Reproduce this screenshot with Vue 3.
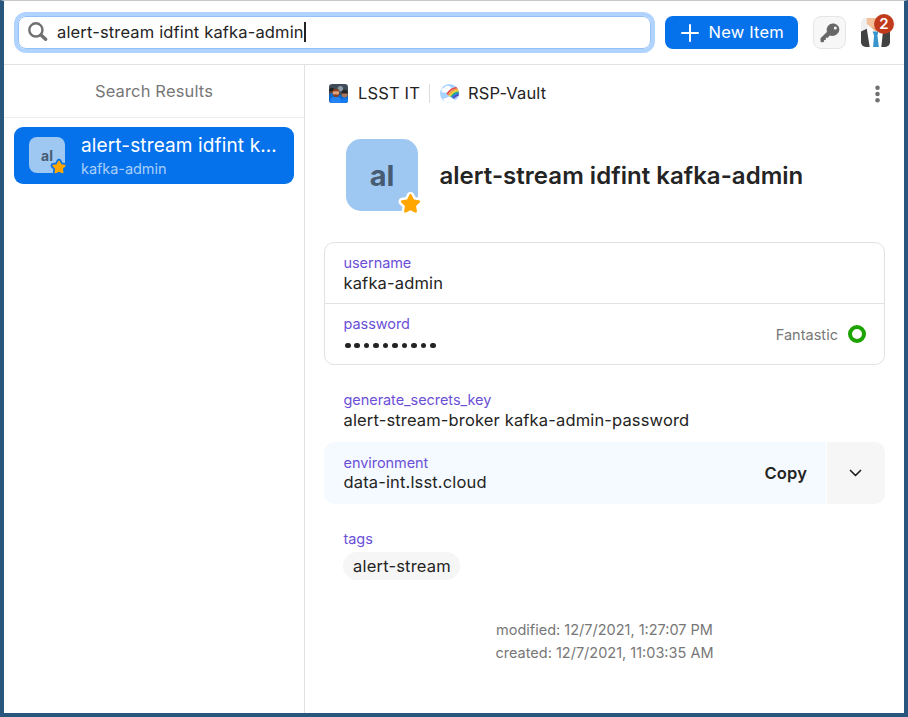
<script setup>
import { ref } from 'vue'

const query = 'alert-stream idfint kafka-admin'
const dots = ref(10)
const star = 'M12 2.2c.6 0 1 .4 1.3.9l2.3 4.7 5.2.8c1.3.2 1.7 1.5.8 2.4l-3.8 3.7.9 5.2c.2 1.3-.9 2-2 1.5L12 19l-4.7 2.4c-1.1.5-2.2-.2-2-1.5l.9-5.2-3.8-3.7c-.9-.9-.5-2.2.8-2.4l5.2-.8 2.3-4.7c.3-.5.7-.9 1.3-.9z'
</script>

<template>
  <div class="window">
    <header class="topbar">
      <div class="search">
        <svg class="search-icon" viewBox="0 0 20 20"><circle cx="7.9" cy="7.9" r="6.6" /><path d="M13 13l4.6 4.3" /></svg>
        <span class="query">{{ query }}</span><i class="caret"></i>
      </div>
      <button class="new-item">
        <svg viewBox="0 0 18 18"><path d="M9 1v16M1 9h16" /></svg>
        <span>New Item</span>
      </button>
      <button class="key">
        <svg viewBox="0 0 20 20"><path fill-rule="evenodd" d="M12.6.4a6.5 6.5 0 0 0-5.7 8.5L.5 15.2v3.3l.8.7h2l.8-.9V17l1.600-.1.2-2.200h1.900l2-2.200c4.500 1.500 9.500-1.500 9.500-6.300 0-3.400-3.200-6-6.700-5.800zm2.700 3.100a1.500 1.500 0 1 1 0 3 1.500 1.500 0 0 1 0-3z" /></svg>
      </button>
      <div class="account">
        <svg viewBox="0 0 30 30">
          <defs><clipPath id="avatar"><rect width="30" height="30" rx="5" /></clipPath></defs>
          <g clip-path="url(#avatar)">
            <path fill="#efefef" d="M0 0h30v30H0z" />
            <path fill="#fff" d="M7 7l8 5 7-5 4 23H5z" />
            <path fill="#f3c09b" d="M6 0h16v8l-7 6-9-8z" />
            <path fill="#e3aa83" d="M10 8l5 3 6-2-6 5z" />
            <path fill="#424242" d="M0 14l6-3 3 19H0zM30 14l-7-3-2 19h9z" />
            <path fill="#3996cc" d="M12 14h6l-1 4 1.5 12h-6l1-12z" />
          </g>
        </svg>
        <span class="badge">2</span>
      </div>
    </header>

    <div class="body">
      <aside>
        <h2>Search Results</h2>
        <div class="result">
          <div class="tile small">
            <b>al</b>
            <svg class="star" viewBox="0 0 24 24"><path :d="star" /></svg>
          </div>
          <div class="result-text">
            <p class="result-title">{{ query }}</p>
            <p class="result-sub">kafka-admin</p>
          </div>
        </div>
      </aside>

      <main>
        <div class="crumbs">
          <svg viewBox="0 0 20 20">
            <defs><clipPath id="team"><rect width="20" height="20" rx="3.5" /></clipPath></defs>
            <g clip-path="url(#team)">
              <path fill="#3f4b58" d="M0 0h20v20H0z" />
              <circle cx="12" cy="5" r="2.8" fill="#8b9aa7" />
              <circle cx="3.3" cy="7.5" r="2.8" fill="#6b4433" /><path fill="#222" d="M0 6q3-4 6.5 0v1.5H0z" />
              <path fill="#0a68cf" d="M0 20v-9q4-3 9 0l11 2v7z" />
              <path fill="#2383f2" d="M1 20q0-7 6-7t7 7z" />
              <circle cx="7.3" cy="9.5" r="3.4" fill="#e1a17b" />
              <path fill="#853f22" d="M3.700 8.500q0-3.500 3.700-3.500t3.700 3.500L10 7.500H5zM4 10.500q3.500 1.200 6.700 0l-.8 2.500q-2.500 2-5 0z" />
              <circle cx="16.5" cy="11" r="3.2" fill="#a8755a" /><path fill="#252527" d="M13 10q0-4 3.500-4t3.500 4z" />
              <path fill="#137af0" d="M12 20q0-5 4.500-5t4.500 5z" />
            </g>
          </svg>
          <span class="team-name">LSST IT</span>
          <i class="divider"></i>
          <svg viewBox="0 0 20 20">
            <defs><clipPath id="vault"><circle cx="10" cy="10" r="10" /></clipPath></defs>
            <g clip-path="url(#vault)">
              <path fill="#a9d3ff" d="M0 0h20v20H0z" />
              <path fill="#fff" d="M1.500 7q0-3 3-3 1.500-3 5-2 2.500 1 2.500 3l-5 4H3.500q-2 0-2-2z" />
              <g class="rainbow"><path stroke="#ef4545" d="M7.500 11Q11 3.700 20 3.700" /><path stroke="#ff982f" d="M8.800 12q3.700-6.500 11.200-6.700" /><path stroke="#f8d735" d="M10.200 12.800Q13.500 7.500 20 6.900" /><path stroke="#42ae68" d="M11.500 13.500q3-4.500 8.500-5.100" /><path stroke="#2685dc" d="M12.700 14.300q2.500-3.700 7.300-4.400" /><path stroke="#5544b7" d="M14 15q2-3 6-3.600" /></g>
              <path fill="#fff" d="M4 20l-.500-4q1.500-2 3.500-1 1-2 3.500-1.300 1.500.3 2 1.800 2.500-.5 3 1.500l3-2v5z" />
            </g>
          </svg>
          <span class="vault-name">RSP-Vault</span>
          <svg class="more" viewBox="0 0 6 20"><circle cx="3" cy="2.6" r="2.7" /><circle cx="3" cy="10" r="2.7" /><circle cx="3" cy="17.4" r="2.7" /></svg>
        </div>

        <div class="item-head">
          <div class="tile large">
            <b>al</b>
            <svg class="star" viewBox="0 0 24 24"><path :d="star" /></svg>
          </div>
          <h1>{{ query }}</h1>
        </div>

        <section class="card">
          <div class="field"><label>username</label><p>kafka-admin</p></div>
          <div class="field password">
            <div><label>password</label><div class="dots"><i v-for="n in dots" :key="n"></i></div></div>
            <div class="strength"><span>Fantastic</span><i></i></div>
          </div>
        </section>

        <div class="field plain"><label>generate_secrets_key</label><p>alert-stream-broker kafka-admin-password</p></div>
        <div class="hovered">
          <div class="field env"><div><label>environment</label><p>data-int.lsst.cloud</p></div><strong>Copy</strong></div>
          <div class="menu"><svg viewBox="0 0 12 8"><path d="M1 1.5l5 5 5-5" /></svg></div>
        </div>
        <div class="tags"><label>tags</label><span>alert-stream</span></div>
        <footer><p>modified: 12/7/2021, 1:27:07 PM</p><p>created: 12/7/2021, 11:03:35 AM</p></footer>
      </main>
    </div>
  </div>
</template>

<style>
body { margin: 0; }
</style>

<style scoped>
* { box-sizing: border-box; }
p, h1, h2 { margin: 0; font-weight: 400; }
.window { width: 908px; height: 717px; border: 4px solid #28567c; border-top: 1px solid #c8c8c8; background: #fff; color: #242424; font: 16.5px/22px Inter, sans-serif; letter-spacing: 0.15px; display: flex; flex-direction: column; }
button { font: inherit; letter-spacing: inherit; padding: 0; }
svg { display: block; flex: none; }
.topbar { height: 64px; flex: none; border-bottom: 1px solid #e2e2e2; display: flex; align-items: center; padding: 0 13px 0 14px; }
.search { width: 633px; height: 33px; border: 1px solid #94c0f3; border-radius: 8px; box-shadow: 0 0 0 4px #b0d4ff; display: flex; align-items: center; padding: 0 0 1px 9px; }
.search-icon { width: 20px; height: 20px; fill: none; stroke: #707070; stroke-width: 2.4; }
.search-icon path { stroke-width: 3.4; stroke-linecap: round; }
.query { margin-left: 9px; white-space: nowrap; }
.caret { width: 2px; height: 20px; background: #222; }
.new-item { width: 133px; height: 33px; margin-left: 14px; border: 0; border-radius: 8px; background: #0572ec; color: #fff; display: flex; align-items: center; padding-left: 16px; gap: 9.5px; letter-spacing: 0.2px; }
.new-item span { padding-bottom: 1px; }
.new-item svg { width: 18px; height: 18px; stroke: #fff; stroke-width: 2; stroke-linecap: round; }
.key { width: 33px; height: 33px; margin-left: 15px; border: 1px solid #e5e5e5; border-radius: 8px; background: #f7f7f7; display: flex; align-items: center; justify-content: center; }
.key svg { width: 20px; height: 20px; fill: #686868; }
.account { margin-left: 15px; position: relative; }
.account svg { width: 29px; height: 29px; }
.badge { position: absolute; top: -4px; right: -4px; width: 20px; height: 20px; border-radius: 50%; background: #c23a1c; color: #fff; font-size: 15px; line-height: 20px; font-weight: 600; text-align: center; }
.body { display: flex; flex: 1; min-height: 0; }
aside { width: 301px; border-right: 1px solid #e2e2e2; flex: none; }
h2 { height: 53px; border-bottom: 1px solid #eee; color: #777; font-size: 16.5px; line-height: 52px; text-align: center; }
.result { margin: 9px 10px; height: 57px; border-radius: 9px; background: #0572ec; color: #fff; display: flex; align-items: center; padding: 0 15px; gap: 16px; }
.tile { background: #9ec8f1; color: #475c73; position: relative; display: flex; align-items: center; justify-content: center; flex: none; letter-spacing: 0; }
.small { width: 36px; height: 36px; border-radius: 8px; font-size: 14px; margin-bottom: 1px; }
.small b { padding-top: 1px; }
.star { position: absolute; overflow: visible; }
.star path { fill: #ffa600; stroke: #0572ec; stroke-width: 5; paint-order: stroke; }
.small .star { width: 16px; height: 16px; right: -2px; bottom: -2px; }
.result-text { min-width: 0; padding-top: 2px; }
.result-title { font-size: 19px; line-height: 24px; letter-spacing: 0.13px; overflow: hidden; white-space: nowrap; text-overflow: ellipsis; }
.result-sub { font-size: 14.5px; line-height: 22px; letter-spacing: -0.05px; color: #a9cff8; }
main { flex: 1; min-width: 0; padding: 0 19px; }
.crumbs { height: 57px; display: flex; align-items: center; padding: 0 5px; }
.crumbs span { padding-bottom: 2px; }
.crumbs svg:not(.more) { width: 19px; height: 19px; }
.team-name { margin-left: 10px; }
.divider { width: 1px; height: 19px; margin: 0 10px 0 9px; background: #ddd; }
.vault-name { margin-left: 9px; }
.rainbow { fill: none; stroke-width: 1.7; }
.more { width: 5px; height: 20px; margin-left: auto; fill: #707070; }
.item-head { display: flex; align-items: center; height: 72px; margin: 17px 0 31px 22px; gap: 22px; }
.large { width: 72px; height: 72px; border-radius: 15px; font-size: 29px; }
.large b { padding-top: 1px; }
.large .star { width: 23px; height: 23px; right: -4px; bottom: -3.5px; }
.large .star path { stroke: #fff; }
h1 { font-size: 24px; line-height: 30px; padding-top: 2px; font-weight: 600; letter-spacing: 0.03px; white-space: nowrap; margin-left: -0.5px; }
.card { border: 1px solid #e2e2e2; border-radius: 10px; height: 123px; }
.field { height: 61px; padding: 11px 19px 0 19.5px; }
.card .field { height: 60px; padding: 10px 18px 0 18.5px; }
label { display: block; color: #6b50d7; font-size: 14.5px; line-height: 20px; letter-spacing: -0.06px; }
.field p { line-height: 20px; }
.card .password { height: 61px; border-top: 1px solid #e2e2e2; display: flex; justify-content: space-between; }
.dots { display: flex; gap: 3.85px; padding: 8.5px 0 0 1.5px; }
.dots i { width: 5.6px; height: 5.6px; border-radius: 50%; background: #242424; }
.strength { color: #777; font-size: 14.5px; letter-spacing: 0.03px; display: flex; align-items: center; height: 40px; gap: 10px; }
.strength span { padding-top: 2px; }
.strength i { width: 18px; height: 18px; border: 4px solid #1ca300; border-radius: 50%; }
.plain { margin-top: 14px; height: 63px; }
.hovered { height: 62px; border-radius: 10px; overflow: hidden; display: flex; gap: 1px; }
.env { flex: 1; height: 62px; background: #f4faff; display: flex; justify-content: space-between; }
.env p { line-height: 18px; }
.env strong { font-weight: 600; line-height: 40px; }
.menu { width: 58px; background: #f6f6f6; display: flex; align-items: center; justify-content: center; padding-right: 1px; }
.menu svg { width: 13px; height: 8px; fill: none; stroke: #242424; stroke-width: 1.7; stroke-linecap: round; stroke-linejoin: round; }
.tags { padding: 25px 19px 0; }
.tags label { padding-left: 0.5px; }
.tags span { display: inline-block; margin-top: 3px; height: 28px; border-radius: 14px; background: #f6f6f6; padding: 0 9px 0 10px; line-height: 28px; letter-spacing: 0.2px; }
footer { color: #777; text-align: center; font-size: 14.5px; line-height: 23px; letter-spacing: 0; margin-top: 38px; }
</style>
